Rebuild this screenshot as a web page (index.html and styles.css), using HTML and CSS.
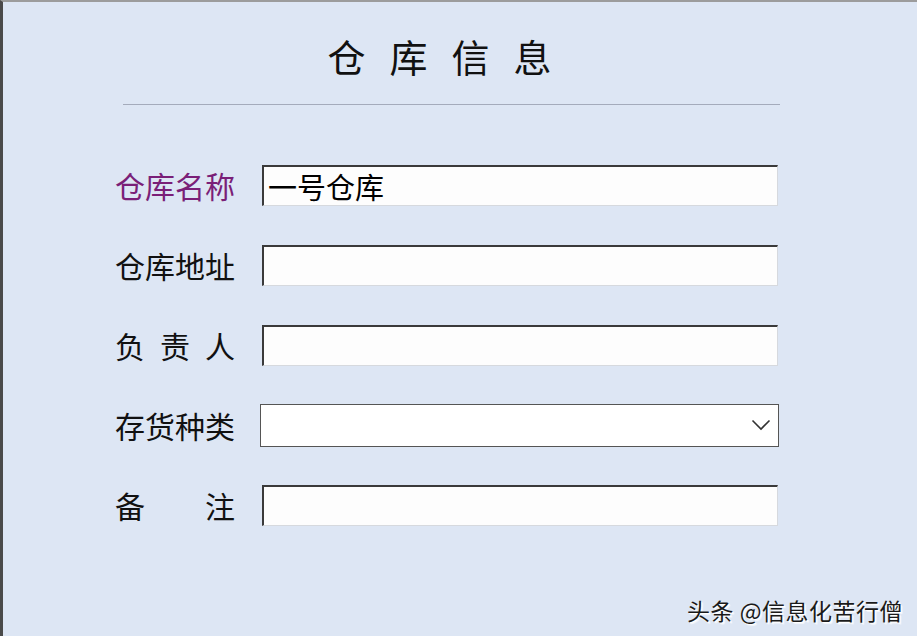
FILE: index.html
```html
<!DOCTYPE html>
<html lang="zh-CN">
<head>
    <meta charset="UTF-8">
    <meta name="viewport" content="width=device-width, initial-scale=1.0">
    <title>仓库信息</title>
<link rel="stylesheet" href="styles.css">
</head>
<body>
    <div class="window">
        <h1 class="title">仓库信息</h1>
        <div class="divider"></div>

        <div class="form">
            <div class="row">
                <label class="label active"><span>仓库名称</span></label>
                <input class="field" type="text" value="一号仓库">
            </div>
            <div class="row">
                <label class="label"><span>仓库地址</span></label>
                <input class="field" type="text" value="">
            </div>
            <div class="row">
                <label class="label"><span>负责人</span></label>
                <input class="field" type="text" value="">
            </div>
            <div class="row">
                <label class="label"><span>存货种类</span></label>
                <div class="select">
                    <svg class="chevron" width="20" height="12" viewBox="0 0 20 12">
                        <polyline points="1.5,1.5 10,10 18.5,1.5" fill="none" stroke="#333" stroke-width="1.6"/>
                    </svg>
                </div>
            </div>
            <div class="row">
                <label class="label"><span>备注</span></label>
                <input class="field" type="text" value="">
            </div>
        </div>

        <div class="watermark">头条 @信息化苦行僧</div>
    </div>
</body>
</html>
```

FILE: styles.css
```css
:root {
    --panel-bg: #dde6f4;
    --frame-top: #9c9c9c;
    --frame-left: #4a4a4a;
    --line: #a4abbb;
    --label-active: #7a1f78;
    --field-dark: #3a3a3a;
    --field-light: #d6d9de;
}

body {
    margin: 0;
    padding: 0;
    background-color: #ffffff;
    font-family: "Noto Sans CJK SC", "Noto Sans", sans-serif;
    color: #111111;
}

.window {
    position: relative;
    width: 914px;
    height: 634px;
    background-color: var(--panel-bg);
    border-top: 2px solid var(--frame-top);
    border-left: 3px solid var(--frame-left);
    overflow: hidden;
}

.title {
    margin: 35px 0 0 120px;
    width: 657px;
    font-size: 38px;
    font-weight: 400;
    line-height: 38px;
    letter-spacing: 24px;
    text-align: center;
    color: #111111;
}

.divider {
    margin: 29px 0 0 120px;
    width: 657px;
    height: 1px;
    background-color: var(--line);
}

.form {
    display: flex;
    flex-direction: column;
    gap: 40px;
    margin-top: 60px;
    padding-left: 112px;
}

.row {
    display: flex;
    align-items: center;
    height: 40px;
}

.label {
    width: 147px;
    flex-shrink: 0;
    font-size: 30px;
    line-height: 40px;
}

.label span {
    display: inline-block;
    width: 120px;
    text-align: justify;
    text-align-last: justify;
}

.label.active {
    color: var(--label-active);
}

.field {
    box-sizing: border-box;
    width: 516px;
    height: 41px;
    margin: 0;
    padding: 0 0 0 4px;
    background-color: #fdfdfd;
    border-top: 2px solid var(--field-dark);
    border-left: 2px solid var(--field-dark);
    border-bottom: 1px solid var(--field-light);
    border-right: 1px solid var(--field-light);
    font-family: "Noto Sans CJK SC", "Noto Sans", sans-serif;
    font-size: 29px;
    color: #000000;
    outline: none;
}

.select {
    box-sizing: border-box;
    display: flex;
    align-items: center;
    justify-content: flex-end;
    width: 519px;
    height: 43px;
    margin-left: -2px;
    padding-right: 7px;
    background-color: #ffffff;
    border: 1px solid #555555;
}

.watermark {
    position: absolute;
    right: 14px;
    bottom: 12px;
    font-size: 23px;
    line-height: 28px;
    letter-spacing: 0.5px;
    color: #1a1a1a;
    text-shadow: 1px 1px 0 #ffffff, 2px 2px 1px rgba(255, 255, 255, 0.7);
}
```
